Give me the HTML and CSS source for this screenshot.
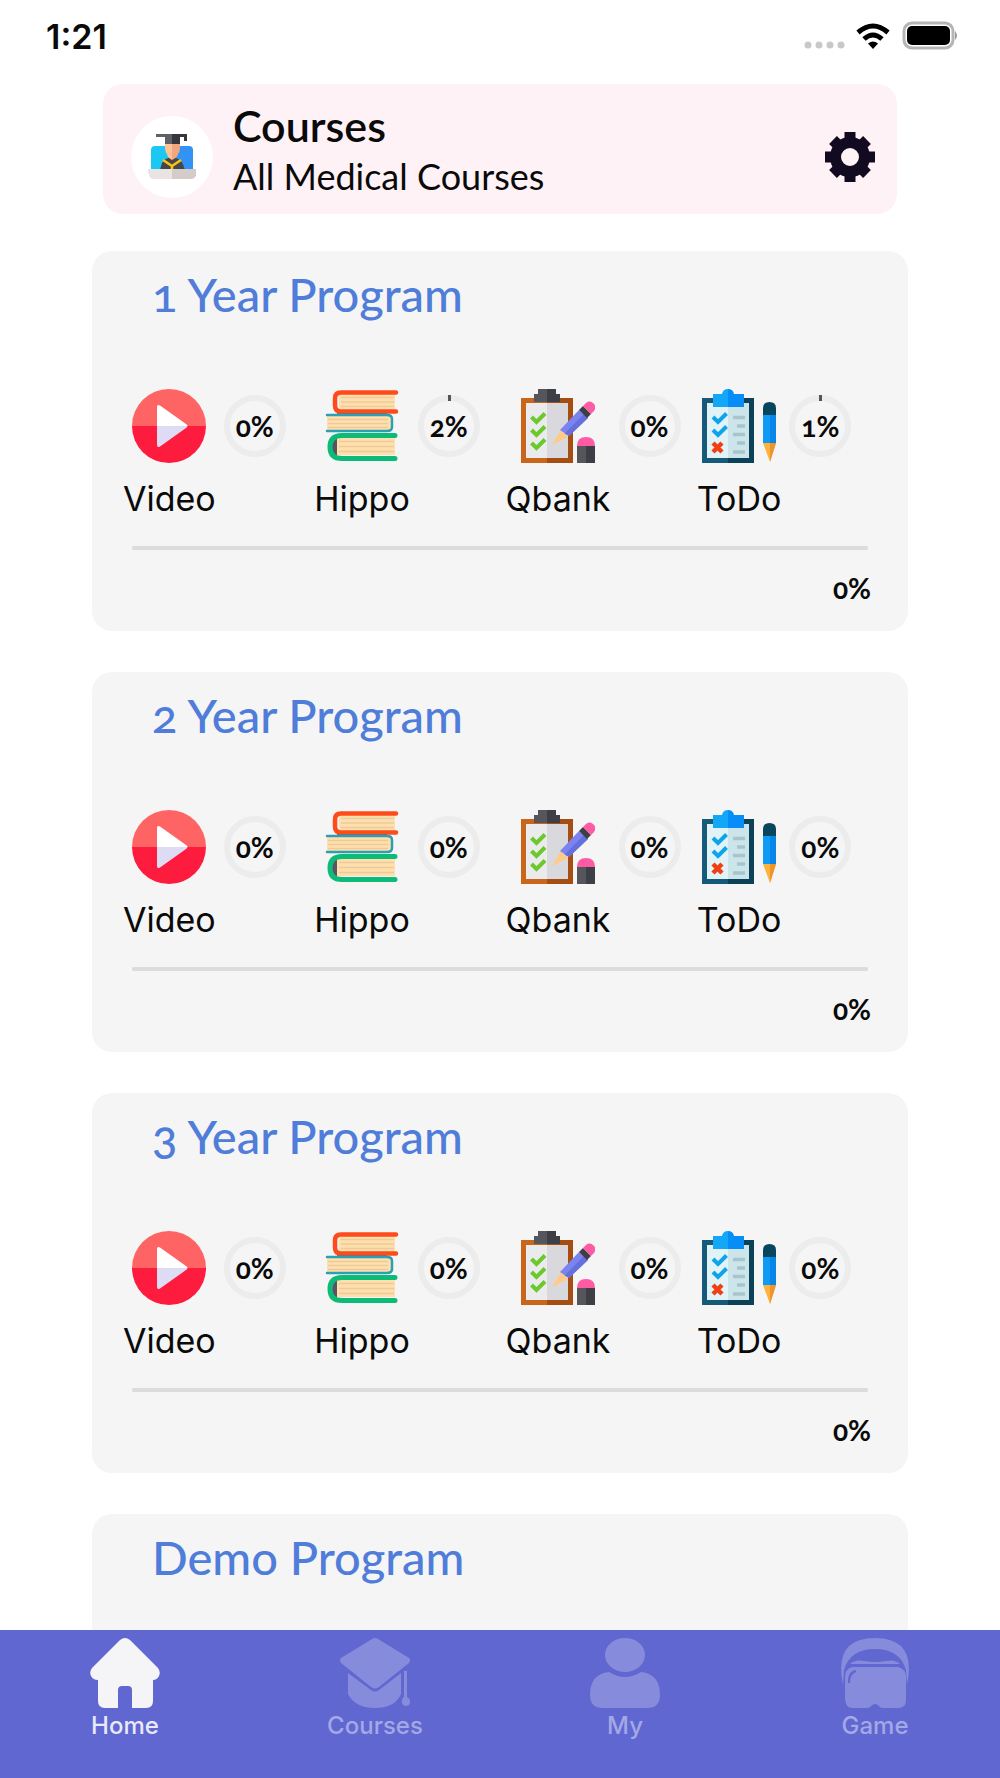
FILE: index.html
```html
<!DOCTYPE html>
<html lang="en">
<head>
    <meta charset="UTF-8">
    <meta name="viewport" content="width=device-width, initial-scale=1.0">
    <title>Courses</title>
    <link rel="stylesheet" href="styles.css">
</head>
<body>
    <!-- shared icons -->
    <svg class="sprite" aria-hidden="true">
        <symbol id="icon-video" viewBox="0 0 74 74">
            <path fill="#ff6465" d="M0 37a37 37 0 0 1 74 0z"/>
            <path fill="#fd1c3d" d="M0 37a37 37 0 0 0 74 0z"/>
            <path fill="#fff" d="M25 37V18q0-3 3-1.500l26 18.500q1.500 1 1.500 2z"/>
            <path fill="#dedcf5" d="M25 37v19q0 3 3 1.500l26-18.500q1.500-1 1.500-2z"/>
        </symbol>
        <symbol id="icon-books" viewBox="0 0 74 74">
            <path fill="#ffe0ad" d="M14 5h56v17H14zM2 27h64v15H2zM12 49h58v17H12z"/>
            <path stroke="#ecca9b" stroke-width="1.500" d="M16 8.500h53M16 13h53M16 17.500h53M3 30.500h60M3 34.500h60M3 38.500h60M14 52.500h55M14 57.500h55M14 62.500h55"/>
            <path fill="none" stroke="#fe4b1c" stroke-width="4.500" stroke-linecap="round" d="M71 3.500H16q-6 0-6 6v7q0 6 6 6h55"/>
            <path stroke="#a65b52" stroke-width="2" d="M12 25h50"/>
            <path fill="none" stroke="#2ba0b5" stroke-width="2.500" stroke-linecap="round" d="M2 26h60q5 0 5 4v8q0 4-5 4H2"/>
            <path fill="#5b5365" d="M12 49v18q-7-2-7-9t7-9z"/>
            <path fill="none" stroke="#0dbb79" stroke-width="5" stroke-linecap="round" d="M70 46.500H17Q5 46.500 5 58t12 11.500h53"/>
        </symbol>
        <symbol id="icon-qbank" viewBox="0 0 74 74">
            <path fill="#c8661c" d="M0 9h26v65H0z"/>
            <path fill="#a54e13" d="M26 9h26v65H26z"/>
            <path fill="#ebebee" d="M5 14h21v55H5z"/>
            <path fill="#d9d9dd" d="M26 14h21v55H26z"/>
            <path fill="#55565c" d="M13 5h4V0h9v13H13z"/>
            <path fill="#3e3f46" d="M26 0h9v5h4v8H26z"/>
            <path fill="none" stroke="#6bc92c" stroke-width="4" d="M10.500 28l5 5 8.500-8.500M10.500 41l5 5 8.500-8.500M10.500 54l5 5 8.500-8.500"/>
            <path fill="#ffca87" d="M31 56l9-15 7 7z"/>
            <path fill="#7a83f0" d="M39 41l19-20 9 8-19 18z"/>
            <path fill="#6670dd" d="M43.500 44.500L63 25l4 4-19 18z"/>
            <path fill="#3e3f46" d="M58 21l4-4 8 8-4 4z"/>
            <path fill="#ff5ba4" d="M62 17l3-3q4-3 7.500.500t.500 7.500l-3 3z"/>
            <path fill="#ff5ba4" d="M56 57q0-9 9-9t9 9z"/>
            <path fill="#55565c" d="M56 57h9v17h-9z"/>
            <path fill="#3e3f46" d="M65 57h9v17h-9z"/>
        </symbol>
        <symbol id="icon-todo" viewBox="0 0 74 74">
            <path fill="#155a78" d="M0 9h26v65H0z"/>
            <path fill="#0b4258" d="M26 9h26v65H26z"/>
            <path fill="#e2f3f8" d="M5 14h21v55H5z"/>
            <path fill="#cce5ea" d="M26 14h21v55H26z"/>
            <path fill="#12a8f7" d="M11 5h9q1-5 6-5v18H11z"/>
            <path fill="#068df7" d="M26 0q5 0 6 5h10v13H26z"/>
            <path fill="none" stroke="#0fa3ea" stroke-width="4" d="M11 28l5 5 8.500-8.500M11 41l5 5 8.500-8.500"/>
            <path stroke="#ef3f13" stroke-width="4.500" d="M11 54l9 9M20 54l-9 9"/>
            <path stroke="#a6c5cc" stroke-width="3.500" d="M31 28.500h12M35 37h8M31 45.500h12M35 54h8M31 63h12"/>
            <path fill="#07465c" d="M61 26v-7q0-6 6.500-6t6.500 6v7z"/>
            <path fill="#0f9af5" d="M61 26h13v28H61z"/>
            <path fill="#0786e8" d="M68 26h6v28h-6z"/>
            <path fill="#ffb23e" d="M61 54h13l-6 19z"/>
            <path fill="#ef942b" d="M68 54h6l-6 19z"/>
        </symbol>
    </svg>

    <div class="status-bar">
        <span class="time">1:21</span>
        <svg class="status-icons" viewBox="0 0 154 30" aria-hidden="true">
            <g fill="#c8c8c8">
                <circle cx="4" cy="24" r="3.500"/>
                <circle cx="15" cy="24" r="3.500"/>
                <circle cx="26" cy="24" r="3.500"/>
                <circle cx="37" cy="24" r="3.500"/>
            </g>
            <g fill="none" stroke="#000" stroke-width="5">
                <path d="M54 11.500q15-13 30 0"/>
                <path d="M60 18q9-8 18 0"/>
            </g>
            <path d="M69 28l-5-5.500q5-4 10 0z"/>
            <rect x="100" y="2" width="49" height="25" rx="8" fill="none" stroke="#b5b5b5" stroke-width="3"/>
            <rect x="103" y="5" width="43" height="19" rx="5"/>
            <path fill="#999" d="M151 10q4 4.500 0 9z"/>
        </svg>
    </div>

    <main class="content">
        <header class="page-header">
            <div class="avatar">
                <svg viewBox="0 0 48 48" aria-hidden="true">
                    <path fill="#1bc7f3" d="M3 17q0-4 4-4h17v24H3z"/>
                    <path fill="#3193f5" d="M24 13h17q4 0 4 4v20H24z"/>
                    <path fill="#45464b" d="M12 37q2-11 8-12h8q6 1 9 12z"/>
                    <path fill="#ffc396" d="M17 10h7v17q-5-3-5-6-2-2-2-6z"/>
                    <path fill="#f2a67e" d="M24 10h8v5q0 4-2 6 0 3-6 6z"/>
                    <path fill="none" stroke="#ffc20c" stroke-width="2.500" d="M15 27l9 6 9-6M24 32v5"/>
                    <path fill="#606166" d="M8 1h16v10h-7V4H8z"/>
                    <path fill="#36373c" d="M24 1h15v7h-3V4h-4v7h-8z"/>
                    <path fill="#e9e4e2" d="M0 36h24v10H6q-6 0-6-10z"/>
                    <path fill="#d5cbc9" d="M24 36h25q0 10-6 10H24z"/>
                </svg>
            </div>
            <div class="header-text">
                <h1>Courses</h1>
                <p>All Medical Courses</p>
            </div>
            <button class="settings-btn" type="button" aria-label="Settings">
                <svg viewBox="0 0 50 50" aria-hidden="true">
                    <g fill="none" stroke="#120a20">
                        <circle cx="25" cy="25" r="14.500" stroke-width="11"/>
                        <path stroke-width="11" d="M25 0v10M25 40v10M0 25h10M40 25h10M8 8l7 7M35 35l7 7M42 8l-7 7M15 35l-7 7"/>
                    </g>
                </svg>
            </button>
        </header>

        <section class="program-card">
            <h2>1 Year Program</h2>
            <div class="stats">
                <div class="stat">
                    <div class="stat-name"><svg class="stat-icon"><use href="#icon-video"/></svg><span>Video</span></div>
                    <div class="ring">0%</div>
                </div>
                <div class="stat">
                    <div class="stat-name"><svg class="stat-icon"><use href="#icon-books"/></svg><span>Hippo</span></div>
                    <div class="ring started">2%</div>
                </div>
                <div class="stat">
                    <div class="stat-name"><svg class="stat-icon"><use href="#icon-qbank"/></svg><span>Qbank</span></div>
                    <div class="ring">0%</div>
                </div>
                <div class="stat">
                    <div class="stat-name"><svg class="stat-icon"><use href="#icon-todo"/></svg><span>ToDo</span></div>
                    <div class="ring started">1%</div>
                </div>
            </div>
            <progress value="0" max="100" aria-label="1 Year Program"></progress>
            <div class="total">0%</div>
        </section>

        <section class="program-card">
            <h2>2 Year Program</h2>
            <div class="stats">
                <div class="stat">
                    <div class="stat-name"><svg class="stat-icon"><use href="#icon-video"/></svg><span>Video</span></div>
                    <div class="ring">0%</div>
                </div>
                <div class="stat">
                    <div class="stat-name"><svg class="stat-icon"><use href="#icon-books"/></svg><span>Hippo</span></div>
                    <div class="ring">0%</div>
                </div>
                <div class="stat">
                    <div class="stat-name"><svg class="stat-icon"><use href="#icon-qbank"/></svg><span>Qbank</span></div>
                    <div class="ring">0%</div>
                </div>
                <div class="stat">
                    <div class="stat-name"><svg class="stat-icon"><use href="#icon-todo"/></svg><span>ToDo</span></div>
                    <div class="ring">0%</div>
                </div>
            </div>
            <progress value="0" max="100" aria-label="2 Year Program"></progress>
            <div class="total">0%</div>
        </section>

        <section class="program-card">
            <h2>3 Year Program</h2>
            <div class="stats">
                <div class="stat">
                    <div class="stat-name"><svg class="stat-icon"><use href="#icon-video"/></svg><span>Video</span></div>
                    <div class="ring">0%</div>
                </div>
                <div class="stat">
                    <div class="stat-name"><svg class="stat-icon"><use href="#icon-books"/></svg><span>Hippo</span></div>
                    <div class="ring">0%</div>
                </div>
                <div class="stat">
                    <div class="stat-name"><svg class="stat-icon"><use href="#icon-qbank"/></svg><span>Qbank</span></div>
                    <div class="ring">0%</div>
                </div>
                <div class="stat">
                    <div class="stat-name"><svg class="stat-icon"><use href="#icon-todo"/></svg><span>ToDo</span></div>
                    <div class="ring">0%</div>
                </div>
            </div>
            <progress value="0" max="100" aria-label="3 Year Program"></progress>
            <div class="total">0%</div>
        </section>

        <section class="program-card">
            <h2>Demo Program</h2>
        </section>
    </main>

    <nav class="tab-bar">
        <a class="tab active" href="#home">
            <svg viewBox="0 0 70 70" aria-hidden="true">
                <path d="M30 2q5-4 10 0l28 28q3 4 1 8-2 4-6 4v21q0 7-7 7H42V52q0-4-4-4h-6q-4 0-4 4v18H15q-7 0-7-7V42q-5 0-7-4t1-8z"/>
            </svg>
            <span>Home</span>
        </a>
        <a class="tab" href="#courses">
            <svg viewBox="0 0 70 70" aria-hidden="true">
                <path d="M32 1q3-2 6 0l31 19q2 2 0 5L39 49q-4 3-8 0L1 25q-2-3 0-5z"/>
                <path d="M8 35l23 17q4 3 8 0l22-17v21q-6 14-26 14T8 56zM64 33h3v26q4 2 3 6-1 3-4 3t-4-3q-1-4 2-6z"/>
            </svg>
            <span>Courses</span>
        </a>
        <a class="tab" href="#my">
            <svg viewBox="0 0 70 70" aria-hidden="true">
                <ellipse cx="35" cy="17" rx="20" ry="17"/>
                <path d="M19 34q16 10 32 0 19 2 19 23 0 13-13 13H13Q0 70 0 57q0-21 19-23z"/>
            </svg>
            <span>My</span>
        </a>
        <a class="tab" href="#game">
            <svg viewBox="0 0 70 70" aria-hidden="true">
                <path d="M3 47Q-7 0 35 0t32 47l-1-15Q60 11 35 11T4 32z"/>
                <path d="M10 26q5-5 14-3 11 2 22 0 9-2 14 3z"/>
                <path fill-rule="evenodd" d="M12 29h46q8 2 8 10v23q0 8-8 8H43q-3 0-4-2-4-4-8 0-1 2-4 2H13q-8 0-8-10V39q0-8 7-10zM8 45v-4q1-8 8-9v2q-6 2-6 11z"/>
            </svg>
            <span>Game</span>
        </a>
    </nav>
</body>
</html>
```
FILE: styles.css
```css
* {
    box-sizing: border-box;
    margin: 0;
    padding: 0;
}

body {
    display: flex;
    flex-direction: column;
    height: 100vh;
    background: #fff;
    color: #0a0a0a;
    font-family: Inter, "Liberation Sans", sans-serif;
}

.sprite {
    display: none;
}

/* status bar */
.status-bar {
    display: flex;
    justify-content: space-between;
    align-items: center;
    flex: none;
    height: 72px;
    padding: 0 42px 0 46px;
}

.time {
    font-size: 34px;
    font-weight: 600;
}

.status-icons {
    width: 154px;
    height: 30px;
}

/* scrolling area */
.content {
    flex: 1;
    min-height: 0;
    overflow-y: auto;
    scrollbar-width: none;
    padding: 12px 92px 0;
}

.page-header {
    display: flex;
    align-items: center;
    height: 130px;
    margin: 0 11px 37px;
    padding: 16px 22px 0 28px;
    border-radius: 20px;
    background: #fef2f6;
    font-family: Lato, sans-serif;
}

.avatar {
    display: flex;
    align-items: center;
    justify-content: center;
    width: 82px;
    height: 82px;
    border-radius: 50%;
    background: #fff;
}

.avatar svg {
    width: 48px;
    height: 48px;
}

.header-text {
    flex: 1;
    margin-left: 20px;
    padding-bottom: 12px;
}

.header-text h1 {
    font-size: 43px;
    line-height: 50px;
    font-weight: 600;
}

.header-text p {
    font-size: 36px;
    line-height: 50px;
}

.settings-btn {
    width: 50px;
    height: 50px;
    border: none;
    background: none;
    cursor: pointer;
}

.settings-btn svg {
    display: block;
    width: 100%;
    height: 100%;
}

/* program cards */
.program-card {
    min-height: 380px;
    margin-bottom: 41px;
    padding: 16px 20px 0 31px;
    border-radius: 20px;
    background: #f5f5f5;
}

.program-card h2 {
    margin-left: 29px;
    color: #4f7dd9;
    font-family: Lato, sans-serif;
    font-size: 47px;
    line-height: 54px;
    font-weight: 500;
    font-variant-numeric: oldstyle-nums;
}

.stats {
    display: grid;
    grid-template-columns: repeat(4, 1fr);
    margin-top: 68px;
}

.stat {
    display: flex;
    gap: 8px;
}

.stat-name {
    display: flex;
    flex-direction: column;
    align-items: center;
    font-size: 34px;
    line-height: 44px;
}

.stat-icon {
    width: 74px;
    height: 74px;
    margin-bottom: 14px;
}

.ring {
    position: relative;
    display: flex;
    align-items: center;
    justify-content: center;
    width: 62px;
    height: 62px;
    margin-top: 6px;
    border: 6px solid #ececec;
    border-radius: 50%;
}

.ring,
.total {
    font-family: Lato, sans-serif;
    font-size: 28px;
    font-weight: 700;
    font-variant-numeric: oldstyle-nums;
}

/* small mark at the top of the ring */
.ring.started::before {
    content: "";
    position: absolute;
    top: -6px;
    left: 24px;
    width: 3px;
    height: 6px;
    background: #555;
}

progress {
    display: block;
    appearance: none;
    width: calc(100% - 29px);
    height: 4px;
    margin: 25px 0 0 9px;
    border: none;
    border-radius: 2px;
    background: #dcdcdc;
}

progress::-webkit-progress-bar {
    border-radius: 2px;
    background: #dcdcdc;
}

.total {
    margin: 20px 17px 0 0;
    line-height: 36px;
    text-align: right;
}

/* bottom tabs */
.tab-bar {
    display: flex;
    flex: none;
    height: 148px;
    padding-top: 8px;
    background: #6067d0;
}

.tab {
    display: flex;
    flex: 1;
    flex-direction: column;
    align-items: center;
    color: #a3a8e6;
    font-size: 24px;
    line-height: 36px;
    font-weight: 500;
    text-decoration: none;
}

.tab svg {
    width: 70px;
    height: 70px;
    fill: #868bdb;
}

.tab.active {
    color: #e8e9fa;
}

.tab.active svg {
    fill: #f5f5f7;
}
```
